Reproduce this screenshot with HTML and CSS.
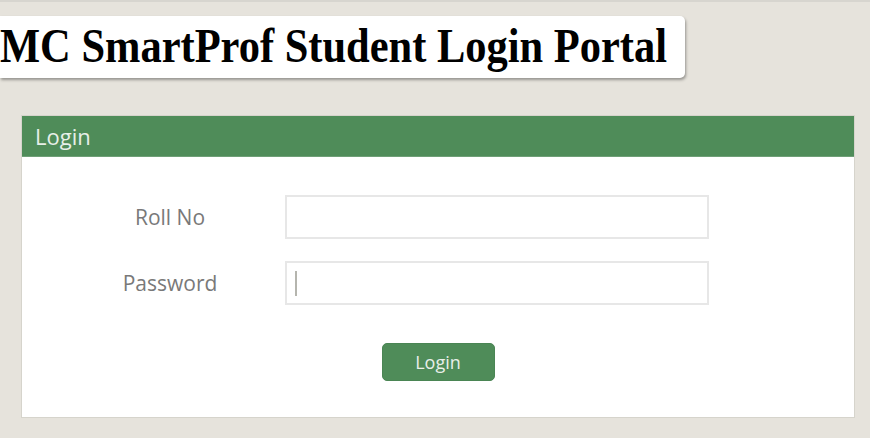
FILE: index.html
```html
<!DOCTYPE html>
<html lang="en">
<head>
<meta charset="utf-8">
<title>SMC SmartProf Student Login Portal</title>
<link rel="stylesheet" href="styles.css">
</head>
<body>
  <header class="title-box">
    <h1 class="title-text">MC SmartProf Student Login Portal</h1>
  </header>
  <section class="panel">
    <div class="panel-header">Login</div>
    <form class="panel-body">
      <div class="row">
        <label class="label" for="roll">Roll No</label>
        <div class="field"><input class="input" id="roll" type="text"></div>
      </div>
      <div class="row">
        <label class="label" for="pwd">Password</label>
        <div class="field"><input class="input" id="pwd" type="password"><span class="caret"></span></div>
      </div>
      <div class="actions">
        <button class="btn" type="button">Login</button>
      </div>
    </form>
  </section>
</body>
</html>
```

FILE: styles.css
```css
html, body {
  margin: 0;
  padding: 0;
}
body {
  background: #e6e3dc;
  border-top: 2px solid #d7d5cf;
  height: 436px;
  overflow: hidden;
  font-family: "Open Sans", "Liberation Sans", sans-serif;
}
.title-box {
  margin-top: 14px;
  width: 685px;
  height: 62px;
  background: #ffffff;
  border-radius: 0 5px 5px 0;
  box-shadow: 1px 2px 3px rgba(0, 0, 0, 0.35);
  overflow: hidden;
}
.title-text {
  margin: 0;
  display: inline-block;
  white-space: nowrap;
  font-family: "Liberation Serif", "Times New Roman", serif;
  font-weight: 700;
  font-size: 48px;
  line-height: 60px;
  color: #000;
  transform: scaleX(0.885);
  transform-origin: left center;
}
.panel {
  margin: 37px 0 0 21px;
  width: 834px;
  box-sizing: border-box;
  border: 1px solid #d6d4cc;
  background: #ffffff;
}
.panel-header {
  height: 41px;
  box-sizing: border-box;
  background: #4f8c59;
  border-bottom: 1px solid #6f9f77;
  color: #e7efe8;
  font-size: 22px;
  line-height: 40px;
  padding-left: 13px;
}
.panel-body {
  margin: 0;
  padding: 38px 0 36px 0;
  display: flex;
  flex-direction: column;
  gap: 22px;
}
.row {
  display: flex;
  align-items: center;
  padding-left: 33px;
}
.label {
  width: 230px;
  text-align: center;
  font-size: 21px;
  color: #797979;
}
.field {
  position: relative;
  width: 424px;
  height: 44px;
}
.input {
  width: 100%;
  height: 100%;
  box-sizing: border-box;
  border: 2px solid #e7e7e7;
  background: #fff;
  margin: 0;
  padding: 0 10px;
  outline: none;
}
.caret {
  position: absolute;
  left: 10px;
  top: 10px;
  width: 2px;
  height: 25px;
  background: #b5b5ae;
}
.actions {
  display: flex;
  justify-content: center;
  margin-top: 16px;
}
.btn {
  width: 113px;
  height: 38px;
  background: #4f8c59;
  border: 1px solid #4a8554;
  border-radius: 5px;
  color: #e9efe9;
  font-family: "Open Sans", "Liberation Sans", sans-serif;
  font-size: 18px;
  padding: 0;
}
```
